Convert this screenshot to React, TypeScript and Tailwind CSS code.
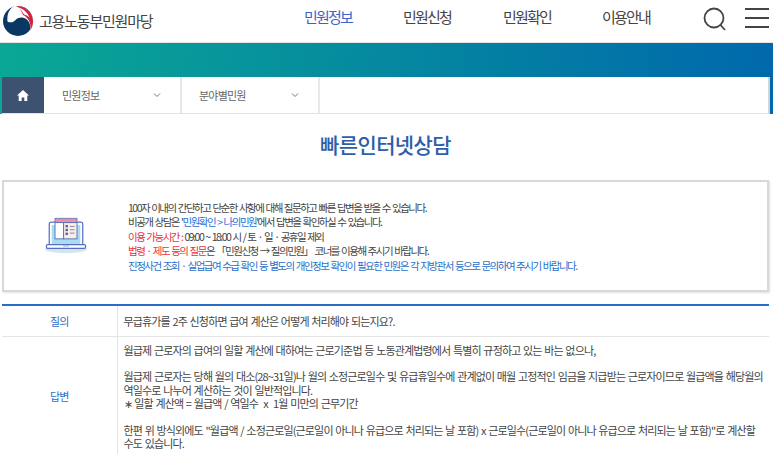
const kr = "font-['Noto_Sans_CJK_KR','Noto_Sans',sans-serif]";

function Logo() {
  return (
    <svg width="32" height="32" viewBox="0 0 32 32" className="shrink-0">
      <circle cx="16" cy="16" r="15" fill="#0b3764" />
      <path d="M13 0.800C21 -0.200 30.500 6 31.200 16c.2 4-1 7.500-3.200 10.500 1.500-6-1-12-6-13.500-4-1.200-7 .5-9 2.500-2 2-5 2.500-7.500 1C4.500 9 8 2.500 13 .800z" fill="#ffffff" />
      <path d="M13.500 1C21.500 0 30.500 6 31 15.500c.2 3.800-.8 7-2.600 9.800 1-6.500-1.800-13-7.400-15.300C19 4 16 1.800 13.500 1z" fill="#d4213d" />
      <path d="M15 2.500C21 3 26 7.500 27.500 13c-1.500-2-3.500-3-5.500-3.400C20 5.500 18 3.500 15 2.500z" fill="#ffffff" />
    </svg>
  );
}

function LaptopIcon() {
  return (
    <svg width="44" height="37" viewBox="0 0 46 38" className="shrink-0">
      <ellipse cx="23" cy="33.500" rx="22" ry="4" fill="#cfe6f3" />
      <rect x="5.500" y="5" width="35" height="26" rx="2" fill="#ffffff" stroke="#5a6fc0" strokeWidth="1.300" />
      <rect x="8" y="8" width="30" height="23" fill="#a9dcf3" />
      <rect x="11.500" y="1" width="23" height="4.500" fill="#ef8f96" stroke="#5a6fc0" strokeWidth="0.800" />
      <rect x="11.500" y="5.500" width="9" height="17" fill="#ffffff" stroke="#5a6fc0" strokeWidth="1" />
      <rect x="20.500" y="5.500" width="14" height="17" fill="#fbeee0" stroke="#5a6fc0" strokeWidth="1" />
      <rect x="22.500" y="8" width="2.500" height="2.500" fill="#4f5fa8" />
      <rect x="22.500" y="12" width="2.500" height="2.500" fill="#4f5fa8" />
      <rect x="22.500" y="16" width="2.500" height="2.500" fill="#4f5fa8" />
      <path d="M27 9.500h5M27 13h5M27 16.500h5" stroke="#7b86bd" strokeWidth="1" />
      <rect x="2.500" y="28.500" width="41" height="4" rx="1.500" fill="#ffffff" stroke="#5a6fc0" strokeWidth="1.300" />
      <rect x="20" y="29.500" width="6" height="1" fill="#9aa6d8" />
    </svg>
  );
}

function Chevron() {
  return (
    <svg width="8" height="6" viewBox="0 0 8 6" className="shrink-0">
      <path d="M1 1.500l3 3 3-3" fill="none" stroke="#777" strokeWidth="1" />
    </svg>
  );
}

export default function App() {
  return (
    <div className={`${kr} w-[773px] h-[454px] overflow-hidden bg-white text-[#333]`}>
      <header className="h-[43px] flex items-center border-b border-[#e4e4e4]">
        <div className="w-[304px] pl-[2px] flex items-center gap-[5px]">
          <Logo />
          <span className="text-[15px] tracking-[-1.200px] text-[#444]">고용노동부민원마당</span>
        </div>
        <nav className="flex text-[15px] tracking-[-1.800px] text-[#444] -mt-[8px]">
          <span className="w-[99px] text-[#3b63d0]">민원정보</span>
          <span className="w-[100px]">민원신청</span>
          <span className="w-[99px]">민원확인</span>
          <span className="w-[101px]">이용안내</span>
        </nav>
        <svg width="24" height="24" viewBox="0 0 24 24" className="-mt-[4px]">
          <circle cx="11" cy="11" r="9.500" fill="none" stroke="#444" strokeWidth="1.800" />
          <path d="M17.500 18l4.500 5" stroke="#444" strokeWidth="1.800" />
        </svg>
        <div className="ml-[18px] w-[24px] flex flex-col gap-[7px] -mt-[6px]">
          <div className="h-[2px] bg-[#444]" />
          <div className="h-[2px] bg-[#444]" />
          <div className="h-[2px] bg-[#444]" />
        </div>
      </header>

      <div className="h-[71px] pt-[34px] pl-[2px] pr-[3px] bg-[linear-gradient(100deg,#0aa894,#0068ac)]">
        <div className="h-[37px] flex bg-white border-b border-r-2 border-[#e2e2e2] border-r-[#cfd6da] text-[11px] tracking-[-0.800px] text-[#666]">
          <div className="w-[42px] bg-[#3d5270] flex items-center justify-center">
            <svg width="12" height="11" viewBox="0 0 12 11">
              <path d="M6 0L0 5.500h1.700V11h3V7.500h2.600V11h3V5.500H12z" fill="#fff" />
            </svg>
          </div>
          <div className="w-[138px] flex items-center justify-between pl-[18px] pr-[19px] border-r-2 border-[#e8e8e8]">
            <span>민원정보</span>
            <Chevron />
          </div>
          <div className="w-[138px] flex items-center justify-between pl-[17px] pr-[19px] border-r-2 border-[#e8e8e8]">
            <span>분야별민원</span>
            <Chevron />
          </div>
        </div>
      </div>

      <h1 className="mt-[15px] pr-[2px] h-[32px] text-center text-[21px] font-medium tracking-[-0.600px] leading-[30px] text-[#2d5ea8]">빠른인터넷상담</h1>

      <section className="mt-[19px] ml-[2px] w-[767px] h-[112px] border-2 border-[#d8d8d8] shadow-[1px_1px_2px_rgba(0,0,0,0.12)] flex items-center">
        <div className="ml-[40px] w-[84px] -mt-[1px]">
          <LaptopIcon />
        </div>
        <div className="text-[10.500px] leading-[14.400px] tracking-[-1.500px] [word-spacing:1.200px] text-[#444] pt-[2px]">
          <p>100자 이내의 간단하고 단순한 사항에 대해 질문하고 빠른 답변을 받을 수 있습니다.</p>
          <p>비공개 상담은 '<span className="text-[#1e6fd9]">민원확인 &gt; 나의민원</span>'에서 답변을 확인하실 수 있습니다.</p>
          <p><span className="text-[#e8323c]">이용 가능시간 :</span> 09:00 ~ 18:00 시 / 토 · 일 · 공휴일 제외</p>
          <p><span className="text-[#e8323c]">법령 · 제도 등의 질문</span>은 「민원신청 → 질의민원」 코너를 이용해 주시기 바랍니다.</p>
          <p className="text-[#2a6fc9]">진정사건 조회 · 실업급여 수급 확인 등 별도의 개인정보 확인이 필요한 민원은 각 지방관서 등으로 문의하여 주시기 바랍니다.</p>
        </div>
      </section>

      <table className="mt-[12px] ml-[2px] w-[767px] border-t-2 border-[#2b6cc4] text-[11px] tracking-[-0.850px] [word-spacing:1px] text-[#444] border-collapse table-fixed">
        <tbody>
          <tr className="border-b border-[#e4e4e4]">
            <th className="w-[115px] h-[31px] font-normal text-center text-[#2a6fc9] border-r border-[#e4e4e4]">질의</th>
            <td className="pl-[6px] pr-[5px]">무급휴가를 2주 신청하면 급여 계산은 어떻게 처리해야 되는지요?.</td>
          </tr>
          <tr>
            <th className="font-normal text-center text-[#2a6fc9] border-r border-[#e4e4e4]">답변</th>
            <td className="pl-[6px] pr-[5px] pt-[7px] pb-[6px] leading-[13.400px]">
              <p>월급제 근로자의 급여의 일할 계산에 대하여는 근로기준법 등 노동관계법령에서 특별히 규정하고 있는 바는 없으나,</p>
              <p className="mt-[13.400px]">월급제 근로자는 당해 월의 대소(28~31일)나 월의 소정근로일수 및 유급휴일수에 관계없이 매월 고정적인 임금을 지급받는 근로자이므로 월급액을 해당월의 역일수로 나누어 계산하는 것이 일반적입니다.</p>
              <p>∗ 일할 계산액 = 월급액 / 역일수&nbsp; x&nbsp; 1월 미만의 근무기간</p>
              <p className="mt-[13.400px]">한편 위 방식외에도 "월급액 / 소정근로일(근로일이 아니나 유급으로 처리되는 날 포함) x 근로일수(근로일이 아니나 유급으로 처리되는 날 포함)"로 계산할 수도 있습니다.</p>
            </td>
          </tr>
        </tbody>
      </table>
    </div>
  );
}
